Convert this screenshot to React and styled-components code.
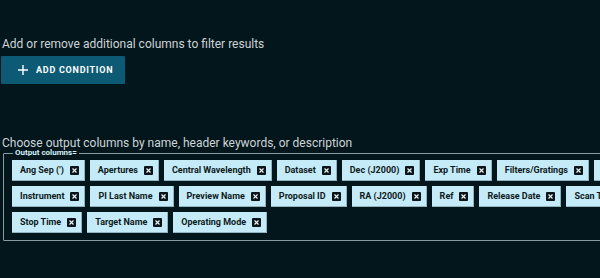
import React from "react";
import styled, { createGlobalStyle } from "styled-components";

const Global = createGlobalStyle`
  html, body { margin: 0; padding: 0; overflow: hidden; }
  body { background: #03161c; font-family: Roboto, "Liberation Sans", sans-serif; }
`;

const Page = styled.div`
  padding: 37px 0 0 1px;
  width: 760px;
`;

const Hint = styled.div`
  font-size: 12px;
  line-height: 14px;
  color: #cdd4d7;
  padding-left: 1px;
`;

const AddButton = styled.button`
  margin-top: 5px;
  display: flex;
  align-items: center;
  gap: 8px;
  height: 28px;
  width: 124px;
  padding: 0 0 0 17px;
  border: none;
  border-radius: 1px;
  background: #0c5a74;
  color: #ffffff;
  font-family: Roboto, "Liberation Sans", sans-serif;
  font-weight: 700;
  font-size: 9px;
  letter-spacing: 0.75px;
  cursor: pointer;
`;

const Section = styled.div`
  margin-top: 52px;
`;

const Fieldset = styled.fieldset`
  margin: -1px 0 0 2px;
  padding: 3px 8px 7px 8px;
  border: 1px solid #8b9aa0;
  border-radius: 1px;
  width: 710px;
`;

const Legend = styled.legend`
  padding: 0 2px;
  margin-left: 1px;
  font-size: 8px;
  font-weight: 700;
  line-height: 8px;
  color: #d6f1fa;
`;

const ChipList = styled.div`
  display: flex;
  flex-wrap: wrap;
  column-gap: 5px;
  row-gap: 5px;
`;

const Chip = styled.div`
  display: flex;
  align-items: center;
  gap: 6px;
  height: 21px;
  box-sizing: border-box;
  padding: 0 5px 0 8px;
  background: #c5ebf8;
  border-bottom: 1px solid #8fb3c0;
  border-right: 1px solid #8fb3c0;
  color: #0e1a20;
  font-size: 9px;
  font-weight: 700;
  white-space: nowrap;
`;

const CloseBox = styled.span`
  display: inline-flex;
  width: 9px;
  height: 9px;
  background: #0b1419;
  border-radius: 1px;
  align-items: center;
  justify-content: center;
`;

const Close = () => (
  <CloseBox>
    <svg width="7" height="7" viewBox="0 0 7 7">
      <path d="M1.5 1.5 L5.5 5.5 M5.5 1.5 L1.5 5.5" stroke="#e8f6fb" strokeWidth="1.2" />
    </svg>
  </CloseBox>
);

const columns = [
  "Ang Sep (')",
  "Apertures",
  "Central Wavelength",
  "Dataset",
  "Dec (J2000)",
  "Exp Time",
  "Filters/Gratings",
  "High-Level Product",
  "Instrument",
  "PI Last Name",
  "Preview Name",
  "Proposal ID",
  "RA (J2000)",
  "Ref",
  "Release Date",
  "Scan Type",
  "Start Time",
  "Stop Time",
  "Target Name",
  "Operating Mode",
];

export default function App() {
  return (
    <>
      <Global />
      <Page>
        <Hint>Add or remove additional columns to filter results</Hint>
        <AddButton>
          <svg width="10" height="10" viewBox="0 0 10 10">
            <path d="M5 0 V10 M0 5 H10" stroke="#ffffff" strokeWidth="1.4" />
          </svg>
          ADD CONDITION
        </AddButton>
        <Section>
          <Hint>Choose output columns by name, header keywords, or description</Hint>
          <Fieldset>
            <Legend>Output columns=</Legend>
            <ChipList>
              {columns.map((c) => (
                <Chip key={c}>
                  {c}
                  <Close />
                </Chip>
              ))}
            </ChipList>
          </Fieldset>
        </Section>
      </Page>
    </>
  );
}
